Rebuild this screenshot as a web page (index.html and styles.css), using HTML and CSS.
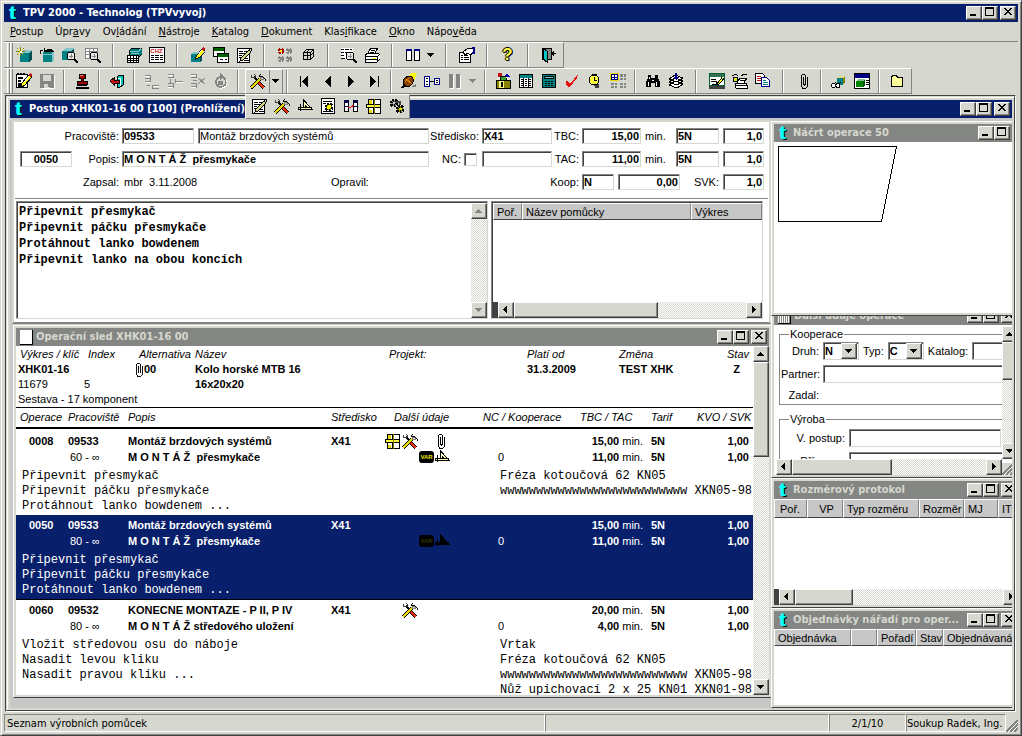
FILE: index.html
```html
<!DOCTYPE html>
<html lang="cs">
<head>
<meta charset="UTF-8">
<meta name="viewport" content="width=device-width, initial-scale=1.0">
<title>TPV 2000 - Technolog (TPVvyvoj)</title>
<link rel="stylesheet" href="styles.css">
</head>
<body>

<svg class="sprite" aria-hidden="true">
    <!-- window buttons and arrows -->
    <symbol id="min" viewBox="0 0 12 10"><path fill="#000" d="M2 7h6v2H2z"/></symbol>
    <symbol id="max" viewBox="0 0 12 10"><path fill="#000" fill-rule="evenodd" d="M1 0h9v9H1zM2 2v6h7V2z"/></symbol>
    <symbol id="close" viewBox="0 0 12 10"><path fill="#000" d="M2 1h2v1h1v1h2V2h1V1h2v1H9v1H8v1H7v1h1v1h1v1h1v1H8V7H7V6H5v1H4v1H2V7h1V6h1V5h1V4H4V3H3V2H2z"/></symbol>
    <symbol id="up" viewBox="0 0 8 8"><path d="M3 2h1v1h1v1h1v1h1v1H0V5h1V4h1V3h1z"/></symbol>
    <symbol id="down" viewBox="0 0 8 8"><path d="M0 2h7v1H6v1H5v1H4v1H3V5H2V4H1V3H0z"/></symbol>
    <symbol id="left" viewBox="0 0 8 8"><path d="M5 0v7H4V6H3V5H2V4H1V3h1V2h1V1h1V0z"/></symbol>
    <symbol id="right" viewBox="0 0 8 8"><path d="M2 0h1v1h1v1h1v1h1v1H5v1H4v1H3v1H2z"/></symbol>

    <!-- shared parts -->
    <symbol id="cube" viewBox="0 0 16 16"><path fill="#84c3c6" d="M4 6l3-3h9l-3 3z"/><path fill="#008284" d="M4 6h9v9H4z"/><path fill="#005153" d="M13 6l3-3v9l-3 3z"/></symbol>
    <symbol id="lens" viewBox="0 0 16 16"><circle cx="9" cy="9" r="4" fill="#e7e7e7" stroke="#000"/><path d="M12 12l4 4" stroke="#000" stroke-width="2"/><path d="M7 9h4M9 7v4" stroke="#848684"/></symbol>
    <symbol id="pencil" viewBox="0 0 16 16"><path d="M6 10l7-8 3 2-7 8-4 2z" fill="#ffff00" stroke="#000"/><path d="M12 2l2-2 2 2-1 3z" fill="#c61010"/><path d="M8 9l5-6" stroke="#fff"/></symbol>

    <!-- first toolbar -->
    <symbol id="cube-new" viewBox="0 0 16 16"><use href="#cube"/><path d="M1 1l7 7M8 1L1 8M4.500 0v9M0 4.500h9" stroke="#848200"/><path d="M2 2l5 5M7 2L2 7" stroke="#ffff00"/><path d="M4 4h2v2H4z" fill="#fff"/></symbol>
    <symbol id="cube-open" viewBox="0 0 16 16"><path fill="#008284" d="M4 5h9v10H4z"/><path fill="#84c3c6" d="M13 5l2-2v10l-2 2z"/><path d="M4 5h11l-2-3H9l-3 1z" fill="#000"/><path d="M1 7V3h3M5 1v4" stroke="#000" fill="none"/><path d="M4 7h9" stroke="#84c3c6"/></symbol>
    <symbol id="cube-find" viewBox="0 0 16 16"><path fill="#84c3c6" d="M0 4l3-3h9L9 4z"/><path fill="#008284" d="M0 4h9v9H0z"/><path fill="#005153" d="M9 4l3-3v8l-3 4z"/><use href="#lens"/></symbol>
    <symbol id="table-find" viewBox="0 0 16 16"><path d="M.5 1.500h12v10H.5z" fill="#fff" stroke="#848684"/><path d="M0 4.500h12M0 7.500h12M4.500 1v10M8.500 1v10" stroke="#848684"/><use href="#lens"/></symbol>
    <symbol id="books" viewBox="0 0 16 16"><path d="M3 4l3-3h10v6l-3 3H3z" fill="#008284" stroke="#000"/><path d="M4 4h9l2-3M5 6h8" stroke="#84c3c6" fill="none"/><path d="M1.500 8.500h11v7h-11z" fill="#fff" stroke="#000"/><path d="M1 11.500h12M1 13.500h12M4.500 9v6M7.500 9v6M10.500 9v6" stroke="#000"/></symbol>
    <symbol id="chz" viewBox="0 0 16 16"><path d="M.5.500h15v15H.5z" fill="#fff" stroke="#000"/><path d="M2 8.500h3M6 8.500h4M11 8.500h3M2 10.500h3M6 10.500h4M11 10.500h3M2 12.500h3M6 12.500h4M11 12.500h3" stroke="#000"/></symbol>
    <symbol id="cube-edit" viewBox="0 0 16 16"><path fill="#84c3c6" d="M1 7l2-2h9l-2 2z"/><path fill="#008284" d="M1 7h9v8H1z"/><path fill="#005153" d="M10 7l2-2v8l-2 2z"/><use href="#pencil" x="1" width="14" height="14"/></symbol>
    <symbol id="windows" viewBox="0 0 16 16"><path d="M.5.500h11v9H.5z" fill="#fff" stroke="#000"/><path d="M1 1h10v3H1z" fill="#006100"/><path d="M4.500 6.500h11v9h-11z" fill="#fff" stroke="#000"/><path d="M5 7h10v3H5z" fill="#006100"/><path d="M7 12.500h3M12 12.500h2" stroke="#000"/></symbol>
    <symbol id="doc-edit" viewBox="0 0 16 16"><path d="M1.500 1.500h12v14h-12z" fill="#fff" stroke="#000"/><path d="M3 4.500h4M8 4.500h4M3 6.500h6M3 8.500h3M3 10.500h3M9 11.500h3M8 13.500h5" stroke="#000"/><path d="M4 14l1-3 8-8 2 2-8 8z" fill="#d6d784" stroke="#000"/><path d="M12 1h3v3" stroke="#000" fill="none"/></symbol>
    <symbol id="gears" viewBox="0 0 16 16"><g fill="none" stroke-width="3" stroke-dasharray="2 1"><circle cx="4" cy="4" r="2" stroke="#a50000"/><circle cx="12" cy="4" r="2" stroke="#848684"/><circle cx="4" cy="12" r="2" stroke="#848684"/><circle cx="12" cy="12" r="2" stroke="#848684"/></g><path d="M3 3h2v2H3z" fill="#ffff00"/></symbol>
    <symbol id="wire-cube" viewBox="0 0 16 16"><path d="M3.500 5.500h7v7h-7zM3.500 5.500l3-3h7v7l-3 3M10.500 5.500l3-3M3 8.500h7l4-3M7.500 5v8M7 5l3-3" fill="none" stroke="#000"/></symbol>
    <symbol id="doc-find" viewBox="0 0 16 16"><path d="M0 1h12v11H0z" fill="#fff"/><path d="M0 2.500h3M4 2.500h4M9 2.500h2M0 5.500h3M4 5.500h4M0 8.500h3M0 11.500h4" stroke="#000"/><use href="#lens"/></symbol>
    <symbol id="printer" viewBox="0 0 16 16"><path d="M4 6l3-5h7l-3 5z" fill="#fff" stroke="#000"/><path d="M7 3.500h4M6 5h4" stroke="#000"/><path d="M1 8l3-2h10l2 2v4l-3 3H1z" fill="#fff" stroke="#000"/><path d="M1 9.500h12l3-2M13 9v5M1 12.500h12" stroke="#000" fill="none"/><path d="M9 11h3v1H9z" fill="#ffff00"/></symbol>
    <symbol id="columns" viewBox="0 0 16 16"><path d="M1.500 2.500h5v11h-5zM9.500 2.500h5v11h-5z" fill="#fff" stroke="#000"/><path d="M1 2h6v2H1zM9 2h6v2H9z" fill="#000084"/></symbol>
    <symbol id="props" viewBox="0 0 16 16"><path d="M.5 5.500h11v10H.5z" fill="#fff" stroke="#000"/><path d="M2 8.500h2M5 8.500h4M2 10.500h2M5 10.500h5M2 12.500h2M5 12.500h5" stroke="#000"/><path d="M4 5l5-4h5v5l-3 2-2-2-3 2z" fill="#fff" stroke="#000"/><path d="M13 0h3v7h-3V5h1V2h-1z" fill="#000084"/></symbol>
    <symbol id="exit" viewBox="0 0 16 16"><path d="M1.500 1.500h9v11h-9z" fill="#848684" stroke="#000"/><path d="M2 1l4 3v11l-4-3z" fill="#00c3c6" stroke="#000"/><path d="M15 6.500h-5M12 4v5M11 6l2-2M11 7l2 2" stroke="#000"/></symbol>

    <!-- second toolbar -->
    <symbol id="note-edit" viewBox="0 0 16 16"><path d="M.5 1.500h11v13H.5z" fill="#fff" stroke="#000"/><path d="M2 1V0M5 1V0M8 1V0M2 4.500h5M2 7.500h3M2 10.500h3M2 12.500h6" stroke="#000" stroke-width="2"/><use href="#pencil"/></symbol>
    <symbol id="save" viewBox="0 0 16 16"><path d="M1 1h14v14H1z" fill="#848684"/><path d="M4 2h8v6H4zM5 11h6v4H5z" fill="#d6d7ce"/><path d="M9 11h2v3H9z" fill="#848684"/><path d="M15.500 2v13.500H2" stroke="#fff" fill="none"/></symbol>
    <symbol id="stamp" viewBox="0 0 16 16"><path d="M5 1h6v4H9v3h4v3H3V8h4V5H5z" fill="#a50000" stroke="#000"/><path d="M3 12h10M2 14.500h13" stroke="#000" stroke-width="2"/><path d="M6 2h3" stroke="#ff8284"/></symbol>
    <symbol id="door" viewBox="0 0 16 16"><path d="M8 4l2-2h4v10l-3 2H8z" fill="#00c3c6" stroke="#000"/><path d="M9 5h2v8" stroke="#fff" fill="none"/><path d="M5 5v2h5v3H5v2L1 8z" fill="#c61010" stroke="#000"/></symbol>
    <symbol id="row-add" viewBox="0 0 16 16"><path d="M1 2.500h6M1 5.500h6M1 8.500h6M6.500 2v7M8 12.500h7M8 15h7M8.500 12v3M3 12h3" fill="none" stroke="#848684"/><path d="M1 3.500h5M1 9.500h5M9 13.500h6" stroke="#fff"/></symbol>
    <symbol id="row-ins" viewBox="0 0 16 16"><path d="M1 1.500h6M1 4.500h6M1 10.500h6M1 13.500h6M6.500 1v4M6.500 10v5M8 8h8M8.500 6v4M3 6v4" fill="none" stroke="#848684"/><path d="M1 2.500h5M1 14.500h5M9 9h7" stroke="#fff"/></symbol>
    <symbol id="row-del" viewBox="0 0 16 16"><path d="M1 1.500h6M1 4.500h6M1 10.500h6M1 13.500h6M6.500 1v4M6.500 10v5M8 5l7 6M8 11l7-6M3 7h4" fill="none" stroke="#848684"/><path d="M1 2.500h5M1 14.500h5" stroke="#fff"/></symbol>
    <symbol id="refresh" viewBox="0 0 16 16"><circle cx="8" cy="9" r="5" fill="#d6d7ce" stroke="#848684" stroke-width="2"/><path d="M7 0l5 4-5 3z" fill="#848684"/><path d="M5 8h5v4H5z" fill="#848684"/><path d="M13 6c3 5-1 10-6 9" stroke="#fff" fill="none"/></symbol>
    <symbol id="tools" viewBox="0 0 16 16"><path d="M4 4l6 6" stroke="#000" stroke-width="2"/><path d="M1 2v2l2 1 2-1V2L4 1" stroke="#424142" fill="none"/><path d="M1 15l9-9" stroke="#000" stroke-width="3"/><path d="M1 15l9-9" stroke="#e7d700" stroke-width="2"/><path d="M9 3l2-2M9 4l3-1 3 3v2" stroke="#000" stroke-width="1" fill="none"/><path d="M10 4h2l2 2-1 1-2-1-1 1z" fill="#c6c7c6" stroke="#848684"/><path d="M9 10l5 5" stroke="#000" stroke-width="4"/><path d="M9 10l5 5" stroke="#e73010" stroke-width="2"/></symbol>
    <symbol id="first" viewBox="0 0 16 16"><path d="M3 3h1v11H3zM11 3v11L5 8.500z"/></symbol>
    <symbol id="prev" viewBox="0 0 16 16"><path d="M11 3v11L5 8.500z"/></symbol>
    <symbol id="next" viewBox="0 0 16 16"><path d="M5 3v11l6-5.500z"/></symbol>
    <symbol id="last" viewBox="0 0 16 16"><path d="M4 3v11l6-5.500zM12 3h1v11h-1z"/></symbol>
    <symbol id="eraser" viewBox="0 0 16 16"><path d="M7 3l3-3h6l-3 9z" fill="#ffff00"/><path d="M10 14h5v-3l-3 1z" fill="#848684"/><path d="M3 6l4-3 4 1 2 4-4 5-5 1-2-3z" fill="#844100" stroke="#000"/><path d="M5 6l6 5M4 9l5-5" stroke="#e78200"/><path d="M0 15l3-4 3 3z"/></symbol>
    <symbol id="link" viewBox="0 0 16 16"><path d="M.5 3.500h5v10h-5zM10.500 5.500h5v6h-5z" fill="#fff" stroke="#000084"/><path d="M2 5.500h2M2 8.500h2M2 11.500h2M12 7.500h2M12 9.500h2M6 8.500h4" stroke="#000"/></symbol>
    <symbol id="pause" viewBox="0 0 16 16"><path d="M2 1h4v14H2zM9 1h4v14H9z" fill="#848684"/><path d="M6.500 2v13.500H3M13.500 2v13.500H10" stroke="#fff" fill="none"/></symbol>
    <symbol id="crate" viewBox="0 0 16 16"><path d="M1 7h14v8H1z" fill="#848200" stroke="#000"/><path d="M4 8h5v7H4z" fill="#ffff84"/><path d="M6.500 9v5" stroke="#000" stroke-width="2"/><path d="M3 0h4v4H3z" fill="#c61010"/><path d="M12 0l3 4H9z" fill="#0000c6"/><path d="M5 3h6v4H5z" fill="#31a231" stroke="#000"/><path d="M2 7l3-3M14 7l-3-3" stroke="#fff"/></symbol>
    <symbol id="table" viewBox="0 0 16 16"><path d="M1.500 1.500h13v13h-13z" fill="#fff" stroke="#000"/><path d="M2 2h12v3H2z" fill="#008284"/><path d="M3 6.500h2M7 6.500h2M11 6.500h2M3 8.500h2M7 8.500h2M11 8.500h2M3 10.500h2M7 10.500h2M11 10.500h2M3 12.500h2M7 12.500h2M11 12.500h2M5.500 5v9M10 5v9" stroke="#000"/></symbol>
    <symbol id="calc" viewBox="0 0 16 16"><path d="M1.500 1.500h13v13h-13z" fill="#008284" stroke="#000"/><path d="M3.500 3.500h9v2h-9z" fill="#84c3c6" stroke="#000"/><path d="M4 8.500h2M7 8.500h2M10 8.500h2M4 10.500h2M7 10.500h2M10 10.500h2M4 12.500h2M7 12.500h2M10 12.500h2" stroke="#000"/></symbol>
    <symbol id="check" viewBox="0 0 16 16"><path d="M2 8l3 1 1 2 8-10-1 4-7 9H4L2 11z" fill="#e71010"/></symbol>
    <symbol id="watch" viewBox="0 0 16 16"><path d="M5 1h4v3H5z" fill="#848200" stroke="#000"/><path d="M7 11h5v4H8z" fill="#424142"/><circle cx="7" cy="7" r="5" fill="#ffff42" stroke="#000"/><path d="M7 4v3h3" stroke="#000" fill="none"/></symbol>
    <symbol id="cells" viewBox="0 0 16 16"><path d="M1.500 1.500h6v5h-6z" fill="#fff" stroke="#000084"/><path d="M1 4h7M4.500 1v6" stroke="#000084"/><path d="M.5 7.500v-7h8v7z" fill="none" stroke="#e7d700"/><path d="M10 1h6v6h-6zM1 10h6v5H1zM10 10h6v5h-6z" fill="#848684"/><path d="M10 4h6M13 1v14M1 12.500h15M4 10v5" stroke="#d6d7ce"/></symbol>
    <symbol id="binoculars" viewBox="0 0 16 16"><path d="M3 2h3v3h4V2h3v3l2 4v5h-5v-4H6v4H1V9l2-4z"/><path d="M3 9v4M11 9v4M4 4v2M7 7h2" stroke="#fff"/></symbol>
    <symbol id="stack" viewBox="0 0 16 16"><path d="M1 12l8 3 6-4-8-3zM1 9l8 3 6-4-8-3zM1 6l8 3 6-4-8-3z" fill="#fff" stroke="#000"/><path d="M7 0h2v4h2L8 7 5 4h2z" fill="#000084"/></symbol>
    <symbol id="chart" viewBox="0 0 16 16"><path d="M.5.500h15v12H.5z" fill="#fff" stroke="#006131"/><path d="M1 1h14v3H1z" fill="#317152"/><path d="M0 13h16v3H0z" fill="#424142"/><path d="M2 6.500h5M2 9l4-1 3 2M3 11h7" stroke="#000" fill="none"/><path d="M8 12l6-7" stroke="#000" stroke-width="3"/><path d="M9 11l5-6" stroke="#ffff00"/></symbol>
    <symbol id="sketch" viewBox="0 0 16 16"><path d="M5 10l3-5h7l-3 5z" fill="#fff" stroke="#000"/><path d="M3 10h11l2 5H4z" fill="#fff" stroke="#000"/><path d="M4 12.500h11M8 7.500h5M0 3l4-2 2 2M9 3l3-2h3" stroke="#000" fill="none"/><path d="M1 4h4v4H1z" fill="#e7e700" stroke="#000"/></symbol>
    <symbol id="copy" viewBox="0 0 16 16"><path d="M.5.500h7l2 2v8h-9z" fill="#fff" stroke="#000"/><path d="M2 3h4M2 5h5M2 7h5" stroke="#c61010"/><path d="M6.500 4.500h5l3 3v6h-8z" fill="#fff" stroke="#000084"/><path d="M8 7.500h3M8 9.500h5M8 11.500h5" stroke="#008284"/></symbol>
    <symbol id="clip" viewBox="0 0 16 16"><path d="M7.500 4v7l1 1 1-1V3l-1-1.500h-2L5.500 3v10l1 2.500h3l2-2V4" stroke="#000" fill="none"/></symbol>
    <symbol id="cube-glasses" viewBox="0 0 16 16"><path fill="#e7d784" d="M6 5l2-2h6l-2 2z"/><path fill="#008284" d="M6 5h6v7H6z"/><path fill="#848200" d="M12 5l2-2v6l-2 3z"/><path d="M5 9L2 12M7 12l3-3" stroke="#000"/><circle cx="2.500" cy="12.500" r="2" fill="#fff" stroke="#000"/><circle cx="7" cy="12.500" r="2" fill="#fff" stroke="#000"/></symbol>
    <symbol id="form-cube" viewBox="0 0 16 16"><path d="M.5.500h15v15H.5z" fill="#fff" stroke="#000"/><path d="M1 1h14v4H1z" fill="#000084"/><path d="M2 8h7v6H2z" fill="#008200"/><path d="M2 8l2-2h7L9 8z" fill="#84c384"/><path d="M9 8l2-2v6l-2 2z" fill="#005100"/><path d="M12 7.500h3M12 9.500h3M12 11.500h3" stroke="#000"/></symbol>
    <symbol id="folder" viewBox="0 0 16 16"><path d="M2.500 4.500l1-2h4l1 2h5v9h-11z" fill="#ffff9c" stroke="#000"/></symbol>

    <!-- tool drop-down and operation flags -->
    <symbol id="triangle" viewBox="0 0 16 16"><path d="M6.500 2v9H15z" fill="#ffffb5" stroke="#000"/><path d="M8 7v2h2z" fill="#fff" stroke="#000"/><path d="M3.500 6v7M1.500 9.500h13v2h-13z" fill="#ffffb5" stroke="#000"/></symbol>
    <symbol id="doc-gear" viewBox="0 0 16 16"><path d="M1.500.500h13v15h-13z" fill="#fff" stroke="#000"/><path d="M3 3.500h9M3 5.500h3" stroke="#000"/><circle cx="9" cy="9" r="3" fill="#848200" stroke="#000" stroke-width="3" stroke-dasharray="2 1"/><circle cx="9" cy="9" r="2" fill="#ffff00"/><path d="M3 13.500h10" stroke="#000"/></symbol>
    <symbol id="flow" viewBox="0 0 16 16"><path d="M1.500 2.500h4v11h-4zM10.500 2.500h4v11h-4z" fill="#fff" stroke="#000"/><path d="M1 2h5v3H1zM10 2h5v3h-5zM1 8h5v1H1zM10 8h5v1h-5z" fill="#000042"/><path d="M5 10l2-1h1l3-2" stroke="#e71010" fill="none"/></symbol>
    <symbol id="pack" viewBox="0 0 16 16"><path d="M2.500 1.500h5v5h-5zM8.500 1.500h6v5h-6zM2.500 9.500h5v6h-5zM8.500 9.500h6v6h-6z" fill="#fff" stroke="#000"/><path d="M3 2h3v4H3zM3 12h3v3H3z" fill="#e7d700"/><path d="M.5 6.500h14v3H.5z" fill="#ffff42" stroke="#000"/><path d="M8 1v15" stroke="#848200"/></symbol>
    <symbol id="cogs" viewBox="0 0 16 16"><circle cx="5" cy="5" r="3" fill="#848684" stroke="#000" stroke-width="3" stroke-dasharray="2 1"/><circle cx="11" cy="11" r="3" fill="#848200" stroke="#000" stroke-width="3" stroke-dasharray="2 1"/><path d="M4 4h2v2H4z" fill="#c6c7c6"/><path d="M10 10h3v2h-3z" fill="#e7e700"/><path d="M7 4h4v3" stroke="#424142" stroke-width="2" fill="none"/></symbol>
    <symbol id="grip" viewBox="0 0 12 12"><path d="M0 12L12 0M4 12l8-8M8 12l4-4" stroke="#848684" stroke-width="2"/><path d="M2 12L12 2M6 12l6-6" stroke="#fff"/></symbol>
</svg>

<div class="app">
    <div class="titlebar">
        <span class="logo">t</span>
        <h1 class="title">TPV 2000 - Technolog (TPVvyvoj)</h1>
        <div class="win-buttons">
            <button type="button" aria-label="Minimalizovat"><svg><use href="#min"/></svg></button>
            <button type="button" aria-label="Maximalizovat"><svg><use href="#max"/></svg></button>
            <button type="button" aria-label="Zavřít"><svg><use href="#close"/></svg></button>
        </div>
    </div>

    <div class="menubar">
        <button type="button"><u>P</u>ostup</button>
        <button type="button">Úpr<u>a</u>vy</button>
        <button type="button">Ov<u>l</u>ádání</button>
        <button type="button"><u>N</u>ástroje</button>
        <button type="button"><u>K</u>atalog</button>
        <button type="button"><u>D</u>okument</button>
        <button type="button">Klas<u>i</u>fikace</button>
        <button type="button"><u>O</u>kno</button>
        <button type="button">Nápo<u>v</u>ěda</button>
    </div>

    <div class="toolbar">
        <button type="button" aria-label="Nový postup"><svg><use href="#cube-new"/></svg></button>
        <button type="button" aria-label="Otevřít"><svg><use href="#cube-open"/></svg></button>
        <button type="button" aria-label="Hledat díl"><svg><use href="#cube-find"/></svg></button>
        <button type="button" aria-label="Hledat v tabulce"><svg><use href="#table-find"/></svg></button>
        <span class="sep wide"></span>
        <button type="button" aria-label="Katalogy"><svg><use href="#books"/></svg></button>
        <button type="button" class="chz"><svg><use href="#chz"/></svg><span>CHZ</span></button>
        <span class="sep wide"></span>
        <button type="button" aria-label="Upravit díl"><svg><use href="#cube-edit"/></svg></button>
        <button type="button" aria-label="Okna"><svg><use href="#windows"/></svg></button>
        <button type="button" aria-label="Upravit postup"><svg><use href="#doc-edit"/></svg></button>
        <span class="sep wide"></span>
        <button type="button" aria-label="Sestavy"><svg><use href="#gears"/></svg></button>
        <button type="button" aria-label="Model"><svg><use href="#wire-cube"/></svg></button>
        <span class="sep wide"></span>
        <button type="button" aria-label="Náhled"><svg><use href="#doc-find"/></svg></button>
        <button type="button" aria-label="Tisk"><svg><use href="#printer"/></svg></button>
        <span class="sep wide"></span>
        <button type="button" aria-label="Sloupce"><svg><use href="#columns"/></svg></button>
        <button type="button" class="drop" aria-label="Volby sloupců"><svg><use href="#down"/></svg></button>
        <span class="sep wide"></span>
        <button type="button" aria-label="Vlastnosti"><svg><use href="#props"/></svg></button>
        <span class="sep wide"></span>
        <button type="button" class="help" aria-label="Nápověda">?</button>
        <span class="sep wide"></span>
        <button type="button" aria-label="Konec"><svg><use href="#exit"/></svg></button>
    </div>

    <div class="toolbar">
        <button type="button" aria-label="Editace"><svg><use href="#note-edit"/></svg></button>
        <button type="button" disabled aria-label="Uložit"><svg><use href="#save"/></svg></button>
        <span class="sep"></span>
        <button type="button" aria-label="Schválit"><svg><use href="#stamp"/></svg></button>
        <span class="sep"></span>
        <button type="button" aria-label="Zpět"><svg><use href="#door"/></svg></button>
        <span class="sep"></span>
        <button type="button" disabled aria-label="Přidat řádek"><svg><use href="#row-add"/></svg></button>
        <button type="button" disabled aria-label="Vložit řádek"><svg><use href="#row-ins"/></svg></button>
        <button type="button" disabled aria-label="Smazat řádek"><svg><use href="#row-del"/></svg></button>
        <button type="button" disabled aria-label="Obnovit"><svg><use href="#refresh"/></svg></button>
        <span class="sep"></span>
        <div class="split">
            <button type="button" aria-label="Nářadí"><svg><use href="#tools"/></svg></button>
            <button type="button" class="drop" aria-label="Další údaje"><svg><use href="#down"/></svg></button>
            <div class="popup">
                <button type="button" aria-label="Popis práce"><svg><use href="#doc-edit"/></svg></button>
                <button type="button" aria-label="Pomůcky"><svg><use href="#tools"/></svg></button>
                <button type="button" aria-label="Náčrt"><svg><use href="#triangle"/></svg></button>
                <button type="button" aria-label="Parametry"><svg><use href="#doc-gear"/></svg></button>
                <button type="button" aria-label="Návaznosti"><svg><use href="#flow"/></svg></button>
                <button type="button" aria-label="Materiál"><svg><use href="#pack"/></svg></button>
                <button type="button" aria-label="Stroje"><svg><use href="#cogs"/></svg></button>
            </div>
        </div>
        <span class="sep"></span>
        <button type="button" aria-label="První"><svg><use href="#first"/></svg></button>
        <button type="button" aria-label="Předchozí"><svg><use href="#prev"/></svg></button>
        <button type="button" aria-label="Následující"><svg><use href="#next"/></svg></button>
        <button type="button" aria-label="Poslední"><svg><use href="#last"/></svg></button>
        <span class="sep"></span>
        <button type="button" aria-label="Vymazat"><svg><use href="#eraser"/></svg></button>
        <button type="button" aria-label="Propojit"><svg><use href="#link"/></svg></button>
        <button type="button" disabled aria-label="Pozastavit"><svg><use href="#pause"/></svg></button>
        <button type="button" disabled class="drop" aria-label="Volby"><svg><use href="#down"/></svg></button>
        <span class="sep"></span>
        <button type="button" aria-label="Kusovník"><svg><use href="#crate"/></svg></button>
        <button type="button" aria-label="Tabulka"><svg><use href="#table"/></svg></button>
        <button type="button" aria-label="Kalkulace"><svg><use href="#calc"/></svg></button>
        <button type="button" aria-label="Kontrola"><svg><use href="#check"/></svg></button>
        <button type="button" aria-label="Časy"><svg><use href="#watch"/></svg></button>
        <button type="button" aria-label="Buňky"><svg><use href="#cells"/></svg></button>
        <span class="sep"></span>
        <button type="button" aria-label="Hledat"><svg><use href="#binoculars"/></svg></button>
        <button type="button" aria-label="Archiv"><svg><use href="#stack"/></svg></button>
        <span class="sep wide"></span>
        <button type="button" aria-label="Grafika"><svg><use href="#chart"/></svg></button>
        <button type="button" aria-label="Návrh"><svg><use href="#sketch"/></svg></button>
        <button type="button" aria-label="Kopírovat"><svg><use href="#copy"/></svg></button>
        <span class="sep wide"></span>
        <button type="button" aria-label="Příloha"><svg><use href="#clip"/></svg></button>
        <span class="sep"></span>
        <button type="button" aria-label="Prohlížet díl"><svg><use href="#cube-glasses"/></svg></button>
        <button type="button" aria-label="Karta dílu"><svg><use href="#form-cube"/></svg></button>
        <span class="sep"></span>
        <button type="button" aria-label="Složka"><svg><use href="#folder"/></svg></button>
    </div>

    <div class="workspace">
        <div class="child">
            <div class="titlebar">
                <span class="logo">t</span>
                <h2 class="title">Postup XHK01-16 00 [100] (Prohlížení)</h2>
                <div class="win-buttons">
                    <button type="button" aria-label="Minimalizovat"><svg><use href="#min"/></svg></button>
                    <button type="button" aria-label="Maximalizovat"><svg><use href="#max"/></svg></button>
                    <button type="button" aria-label="Zavřít"><svg><use href="#close"/></svg></button>
                </div>
            </div>

            <div class="desk">
                <div class="main-col">
                    <form class="panel">
                        <div class="fields">
                            <label class="span2" for="pracoviste">Pracoviště:</label>
                            <div class="pair">
                                <input class="w72 b" type="text" id="pracoviste" value="09533">
                                <input class="grow" type="text" aria-label="Název pracoviště" value="Montáž brzdových systémů">
                            </div>
                            <label for="stredisko">Středisko:</label>
                            <input class="b" type="text" id="stredisko" value="X41">
                            <label for="tbc">TBC:</label>
                            <input class="b num" type="text" id="tbc" value="15,00">
                            <span class="unit">min.</span>
                            <input class="b" type="text" aria-label="Tarif TBC" value="5N">
                            <input class="b num end" type="text" aria-label="Koeficient TBC" value="1,0">

                            <input class="b mid" type="text" aria-label="Číslo operace" value="0050">
                            <label for="popis">Popis:</label>
                            <input class="b" type="text" id="popis" value="M O N T Á Ž  přesmykače">
                            <div class="nc"><label for="nc">NC:</label><input type="checkbox" id="nc"></div>
                            <input type="text" aria-label="NC program" value="">
                            <label for="tac">TAC:</label>
                            <input class="b num" type="text" id="tac" value="11,00">
                            <span class="unit">min.</span>
                            <input class="b" type="text" aria-label="Tarif TAC" value="5N">
                            <input class="b num end" type="text" aria-label="Koeficient TAC" value="1,0">

                            <span class="span2 cap">Zapsal:</span>
                            <div class="signed"><span>mbr&nbsp; 3.11.2008</span><span>Opravil:</span></div>
                            <label class="koop" for="koop">Koop:</label>
                            <div class="pair span3">
                                <input class="w32 b" type="text" id="koop" value="N">
                                <input class="w62 b num" type="text" aria-label="Cena kooperace" value="0,00">
                                <label class="svk" for="svk">SVK:</label>
                            </div>
                            <input class="b num end" type="text" id="svk" value="1,0">
                        </div>
                        <div class="lower">
                            <div class="memo">
                                <textarea aria-label="Popis práce" spellcheck="false">Připevnit přesmykač
Připevnit páčku přesmykače
Protáhnout lanko bowdenem
Připevnit lanko na obou koncích</textarea>
                                <div class="vscroll off">
                                    <button type="button" aria-label="Nahoru"><svg><use href="#up"/></svg></button>
                                    <span class="track"></span>
                                    <button type="button" aria-label="Dolů"><svg><use href="#down"/></svg></button>
                                </div>
                            </div>
                            <div class="listbox">
                                <table class="grid aids">
                                    <colgroup><col class="c-por"><col><col class="c-vyk"></colgroup>
                                    <thead><tr><th>Poř.</th><th>Název pomůcky</th><th>Výkres</th></tr></thead>
                                </table>
                                <div class="blank"></div>
                                <div class="hscroll">
                                    <span class="stub"></span>
                                    <button type="button" aria-label="Vlevo"><svg><use href="#left"/></svg></button>
                                    <span class="thumb w144"></span><span class="track"></span>
                                    <button type="button" aria-label="Vpravo"><svg><use href="#right"/></svg></button>
                                </div>
                            </div>
                        </div>
                    </form>

                    <section class="subwin sled">
                        <div class="titlebar inactive">
                            <span class="page"></span>
                            <h3 class="title">Operační sled XHK01-16 00</h3>
                            <div class="win-buttons">
                                <button type="button" aria-label="Minimalizovat"><svg><use href="#min"/></svg></button>
                                <button type="button" aria-label="Maximalizovat"><svg><use href="#max"/></svg></button>
                                <button type="button" aria-label="Zavřít"><svg><use href="#close"/></svg></button>
                            </div>
                        </div>
                        <div class="sled-body">
                            <div class="report">
                                <table class="head">
                                    <colgroup><col class="h1"><col class="h2"><col class="h3"><col class="h4"><col class="h5"><col class="h6"><col class="h7"><col></colgroup>
                                    <tr class="it"><th>Výkres / klíč</th><th>Index</th><th>Alternativa</th><th>Název</th><th>Projekt:</th><th>Platí od</th><th>Změna</th><th class="r">Stav</th></tr>
                                    <tr class="bold"><td>XHK01-16</td><td></td><td><svg class="clip"><use href="#clip"/></svg>00</td><td>Kolo horské MTB 16</td><td></td><td>31.3.2009</td><td>TEST XHK</td><td class="r state">Z</td></tr>
                                    <tr><td>11679</td><td>5</td><td></td><td><b>16x20x20</b></td><td></td><td></td><td></td><td></td></tr>
                                    <tr><td colspan="8">Sestava - 17 komponent</td></tr>
                                </table>
                                <table class="ops">
                                    <colgroup><col class="o1"><col class="o2"><col><col class="o4"><col class="o5"><col class="o6"><col class="o7"><col class="o8"><col class="o9"></colgroup>
                                    <thead>
                                        <tr class="it"><th>Operace</th><th>Pracoviště</th><th>Popis</th><th>Středisko</th><th class="more">Další údaje</th><th>NC / Kooperace</th><th class="tbc">TBC / TAC</th><th>Tarif</th><th class="r">KVO / SVK</th></tr>
                                    </thead>
                                    <tbody>
                                        <tr class="l1"><td class="no">0008</td><td>09533</td><td>Montáž brzdových systémů</td><td>X41</td><td class="flags"><div><svg><use href="#pack"/></svg><svg><use href="#tools"/></svg><svg class="last"><use href="#clip"/></svg></div></td><td></td><td class="time">15,00 <span>min.</span></td><td>5N</td><td class="r">1,00</td></tr>
                                        <tr class="l2"><td></td><td class="kap">60 - ∞</td><td>M O N T Á Ž &nbsp;přesmykače</td><td></td><td class="flags"><div class="second"><b class="var">VAR</b><svg><use href="#triangle"/></svg></div></td><td class="nck">0</td><td class="time">11,00 <span>min.</span></td><td>5N</td><td class="r">1,00</td></tr>
                                        <tr class="notes"><td colspan="5">Připevnit přesmykač
Připevnit páčku přesmykače
Protáhnout lanko bowdenem ...</td><td colspan="4" class="aid">Fréza kotoučová 62 KN05
wwwwwwwwwwwwwwwwwwwwwwwwww XKN05-98</td></tr>
                                    </tbody>
                                    <tbody class="sel">
                                        <tr class="l1"><td class="no">0050</td><td>09533</td><td>Montáž brzdových systémů</td><td>X41</td><td></td><td></td><td class="time">15,00 <span>min.</span></td><td>5N</td><td class="r">1,00</td></tr>
                                        <tr class="l2"><td></td><td class="kap">80 - ∞</td><td>M O N T Á Ž &nbsp;přesmykače</td><td></td><td class="flags"><div class="second"><b class="var">VAR</b><svg><use href="#triangle"/></svg></div></td><td class="nck">0</td><td class="time">11,00 <span>min.</span></td><td>5N</td><td class="r">1,00</td></tr>
                                        <tr class="notes"><td colspan="5">Připevnit přesmykač
Připevnit páčku přesmykače
Protáhnout lanko bowdenem ...</td><td colspan="4" class="aid"></td></tr>
                                    </tbody>
                                    <tbody>
                                        <tr class="l1"><td class="no">0060</td><td>09532</td><td>KONECNE MONTAZE - P II, P IV</td><td>X41</td><td class="flags"><div class="single"><svg><use href="#tools"/></svg></div></td><td></td><td class="time">20,00 <span>min.</span></td><td>5N</td><td class="r">1,00</td></tr>
                                        <tr class="l2"><td></td><td class="kap">80 - ∞</td><td>M O N T Á Ž středového uložení</td><td></td><td></td><td class="nck">0</td><td class="time">4,00 <span>min.</span></td><td>5N</td><td class="r">1,00</td></tr>
                                        <tr class="notes"><td colspan="5">Vložit středovou osu do náboje
Nasadit levou kliku
Nasadit pravou kliku ...</td><td colspan="4" class="aid">Vrtak
Fréza kotoučová 62 KN05
wwwwwwwwwwwwwwwwwwwwwwwwww XKN05-98
Nůž upichovací 2 x 25 KN01 XKN01-98</td></tr>
                                    </tbody>
                                </table>
                            </div>
                            <div class="vscroll">
                                <button type="button" aria-label="Nahoru"><svg><use href="#up"/></svg></button>
                                <span class="thumb h95"></span><span class="track"></span>
                                <button type="button" aria-label="Dolů"><svg><use href="#down"/></svg></button>
                            </div>
                        </div>
                    </section>
                </div>

                <div class="side-col">
                    <section class="subwin nacrt">
                        <div class="titlebar inactive">
                            <span class="logo">t</span>
                            <h3 class="title">Náčrt operace 50</h3>
                            <div class="win-buttons">
                                <button type="button" aria-label="Minimalizovat"><svg><use href="#min"/></svg></button>
                                <button type="button" aria-label="Maximalizovat"><svg><use href="#max"/></svg></button>
                            </div>
                        </div>
                        <div class="canvas">
                            <svg width="130" height="90"><path d="M4.500 4.500h118l-15 75H4.500z" fill="none" stroke="#000"/></svg>
                        </div>
                    </section>

                    <section class="subwin dalsi">
                        <div class="titlebar inactive">
                            <span class="page lines"></span>
                            <h3 class="title">Další údaje operace</h3>
                            <div class="win-buttons">
                                <button type="button" aria-label="Minimalizovat"><svg><use href="#min"/></svg></button>
                                <button type="button" aria-label="Maximalizovat"><svg><use href="#max"/></svg></button>
                                <button type="button" aria-label="Zavřít"><svg><use href="#close"/></svg></button>
                            </div>
                        </div>
                        <div class="dalsi-body">
                            <form class="dalsi-form">
                                <fieldset class="coop">
                                    <legend>Kooperace</legend>
                                    <div class="row">
                                        <label class="short" for="druh">Druh:</label>
                                        <span class="combo"><select id="druh"><option>N</option></select><i><svg><use href="#down"/></svg></i></span>
                                        <label for="typ">Typ:</label>
                                        <span class="combo"><select id="typ"><option>C</option></select><i><svg><use href="#down"/></svg></i></span>
                                        <label for="katalog">Katalog:</label>
                                        <input class="grow" type="text" id="katalog">
                                    </div>
                                    <div class="row"><label class="short" for="partner">Partner:</label><input class="grow" type="text" id="partner"></div>
                                    <div class="row last"><span class="short">Zadal:</span></div>
                                </fieldset>
                                <fieldset>
                                    <legend>Výroba</legend>
                                    <div class="row"><label class="long" for="vpostup">V. postup:</label><input class="w152" type="text" id="vpostup"></div>
                                    <div class="row"><label class="long" for="priprava">Příprava:</label><input class="grow" type="text" id="priprava"></div>
                                </fieldset>
                            </form>
                            <div class="vscroll">
                                <button type="button" aria-label="Nahoru"><svg><use href="#up"/></svg></button>
                                <span class="thumb h38"></span><span class="track"></span>
                                <button type="button" aria-label="Dolů"><svg><use href="#down"/></svg></button>
                            </div>
                            <div class="hscroll">
                                <button type="button" aria-label="Vlevo"><svg><use href="#left"/></svg></button>
                                <span class="thumb w100"></span><span class="track"></span>
                                <button type="button" aria-label="Vpravo"><svg><use href="#right"/></svg></button>
                            </div>
                            <svg class="size-grip"><use href="#grip"/></svg>
                        </div>
                    </section>

                    <section class="subwin rozmer">
                        <div class="titlebar inactive">
                            <span class="logo">t</span>
                            <h3 class="title">Rozměrový protokol</h3>
                            <div class="win-buttons">
                                <button type="button" aria-label="Minimalizovat"><svg><use href="#min"/></svg></button>
                                <button type="button" aria-label="Maximalizovat"><svg><use href="#max"/></svg></button>
                                <button type="button" aria-label="Zavřít"><svg><use href="#close"/></svg></button>
                            </div>
                        </div>
                        <table class="grid">
                            <colgroup><col class="r1"><col class="r2"><col class="r3"><col class="r4"><col class="r5"><col></colgroup>
                            <thead><tr><th>Poř.</th><th class="c">VP</th><th>Typ rozměru</th><th>Rozměr</th><th>MJ</th><th>IT</th></tr></thead>
                        </table>
                        <div class="blank"></div>
                        <div class="hscroll">
                            <span class="stub"></span>
                            <button type="button" aria-label="Vlevo"><svg><use href="#left"/></svg></button>
                            <span class="thumb w58"></span><span class="track"></span>
                            <button type="button" aria-label="Vpravo"><svg><use href="#right"/></svg></button>
                        </div>
                    </section>

                    <section class="subwin objed">
                        <div class="titlebar inactive">
                            <span class="logo">t</span>
                            <h3 class="title">Objednávky nářadí pro oper...</h3>
                            <div class="win-buttons">
                                <button type="button" aria-label="Minimalizovat"><svg><use href="#min"/></svg></button>
                                <button type="button" aria-label="Maximalizovat"><svg><use href="#max"/></svg></button>
                                <button type="button" aria-label="Zavřít"><svg><use href="#close"/></svg></button>
                            </div>
                        </div>
                        <table class="grid">
                            <colgroup><col class="b1"><col class="b2"><col class="b3"><col class="b4"><col></colgroup>
                            <thead><tr><th>Objednávka</th><th></th><th>Pořadí</th><th>Stav</th><th>Objednávaná</th></tr></thead>
                        </table>
                        <div class="blank"></div>
                    </section>
                </div>
            </div>
        </div>
    </div>

    <div class="statusbar">
        <span class="s-text">Seznam výrobních pomůcek</span>
        <span class="s-empty"></span>
        <span class="s-pos">2/1/10</span>
        <span class="s-user">Soukup Radek, Ing.</span>
        <svg class="size-grip"><use href="#grip"/></svg>
    </div>
</div>

</body>
</html>
```
FILE: styles.css
```css
* {
    box-sizing: border-box;
}
body {
    margin: 0;
    font-family: "Liberation Sans", Arial, sans-serif;
    font-size: 11px;
    line-height: 14px;
    color: #000;
    background-color: #d6d7ce;
}
button, input, select, textarea {
    font: inherit;
    color: inherit;
    margin: 0;
    padding: 0;
    border-radius: 0;
}
svg {
    display: block;
    shape-rendering: crispEdges;
}
.sprite {
    position: absolute;
    width: 0;
    height: 0;
}

/* main window */
.app {
    display: flex;
    flex-direction: column;
    height: 100vh;
    padding: 3px;
    border: 1px solid;
    border-color: #d6d7ce #424142 #424142 #d6d7ce;
    box-shadow: inset 1px 1px #fff, inset -1px -1px #848684;
}
.titlebar {
    display: flex;
    align-items: center;
    flex: none;
    height: 18px;
    padding: 0 2px 0 4px;
    background-color: #08206b;
    color: #fff;
}
.titlebar.inactive {
    background-color: #848684;
    color: #d6d7ce;
}
.title {
    flex: 1;
    margin: 0;
    overflow: hidden;
    white-space: nowrap;
    font: bold 11px/16px "DejaVu Sans Condensed", "DejaVu Sans", sans-serif;
}
.logo {
    width: 15px;
    padding-left: 1px;
    font: bold 18px/16px "Liberation Sans", sans-serif;
    color: #00ffff;
    text-shadow: 1px 0 #00ffff, 2px 1px #000;
}
.page {
    width: 13px;
    height: 15px;
    margin-right: 3px;
    background-color: #fff;
    border: 1px solid #000;
    border-width: 0 1px 1px 0;
}
.page.lines {
    background: repeating-linear-gradient(90deg, #fff 0 1px, #848684 1px 2px);
}
.win-buttons {
    display: flex;
}
.win-buttons button {
    width: 16px;
    height: 14px;
    background-color: #d6d7ce;
    border: 1px solid;
    border-color: #fff #424142 #424142 #fff;
    box-shadow: inset -1px -1px #848684;
}
.win-buttons button:nth-child(3) {
    margin-left: 2px;
}
.win-buttons svg {
    width: 12px;
    height: 10px;
    margin: 0 1px 2px;
}
.menubar {
    display: flex;
    flex: none;
    height: 20px;
    border-bottom: 1px solid #848684;
}
.menubar button {
    padding: 0 6px;
    border: 0;
    background: none;
    font: 11px/20px "DejaVu Sans Condensed", "DejaVu Sans", sans-serif;
}
.toolbar {
    display: flex;
    align-items: center;
    align-self: flex-start;
    flex: none;
    height: 26px;
    padding: 0 3px 0 8px;
    border-top: 1px solid #fff;
    border-bottom: 1px solid #848684;
    border-right: 1px solid #848684;
    background: linear-gradient(90deg, #fff 1px, #d6d7ce 1px 2px, #848684 2px 3px, #fff 3px 4px, #d6d7ce 4px 5px, #848684 5px 6px, #d6d7ce 6px) 3px 0 no-repeat;
}
.toolbar button {
    display: flex;
    justify-content: center;
    align-items: center;
    width: 23px;
    height: 23px;
    border: 0;
    background: none;
}
.toolbar svg {
    width: 16px;
    height: 16px;
}
.toolbar .drop {
    width: 13px;
}
.toolbar .drop svg {
    width: 8px;
    height: 8px;
}
.toolbar .drop:disabled svg {
    fill: #848684;
}
.toolbar .chz {
    position: relative;
}
.chz span {
    position: absolute;
    top: 4px;
    font: bold 6px/7px "Liberation Sans", sans-serif;
    color: #c61010;
}
.toolbar .help {
    font: bold 17px/20px "Liberation Sans", sans-serif;
    color: #ffff42;
    text-shadow: 1px 0 #000, -1px 0 #000, 0 1px #000, 0 -1px #000, 1px 1px #000;
}
.sep {
    width: 2px;
    height: 23px;
    margin: 0 5px;
    background: linear-gradient(90deg, #848684 1px, #fff 1px);
}
.sep.wide {
    margin: 0 8px;
}
.split {
    position: relative;
    display: flex;
    border: 1px solid;
    border-color: #fff #848684 #848684 #fff;
    margin: 0 -2px 0 1px;
}
.split > .drop {
    border-left: 1px solid #848684;
}
.popup {
    position: absolute;
    z-index: 5;
    top: 24px;
    left: -1px;
    display: flex;
    padding: 0 1px;
    background-color: #d6d7ce;
    border: 1px solid;
    border-color: #fff #848684 #848684 #fff;
}

/* document area */
.workspace {
    display: flex;
    flex: 1;
    min-height: 0;
    margin: 1px 2px 0 1px;
    border: 1px solid;
    border-color: #424142 #fff #fff #424142;
}
.child {
    display: flex;
    flex-direction: column;
    flex: 1;
    min-width: 0;
    padding: 3px 2px 2px 3px;
    border: 1px solid;
    border-color: #d6d7ce #424142 #424142 #d6d7ce;
    box-shadow: inset 1px 1px #fff;
}
.desk {
    display: flex;
    flex: 1;
    min-height: 0;
    padding-left: 2px;
    background-color: #c6c7c6;
    overflow: hidden;
}
.main-col {
    display: flex;
    flex-direction: column;
    flex: 1;
    min-width: 0;
}
.side-col {
    display: flex;
    flex-direction: column;
    flex: none;
    width: 241px;
}
.subwin {
    display: flex;
    flex-direction: column;
    flex: none;
    padding: 2px;
    background-color: #d6d7ce;
    border: 1px solid;
    border-color: #fff #424142 #424142 #fff;
}

/* operation form */
.panel {
    flex: none;
    margin-top: 2px;
    padding: 0 1px 1px;
    background-color: #fff;
    border: 2px solid #d6d7ce;
    border-bottom: 2px solid #848684;
}
.fields {
    display: grid;
    grid-template-columns: 52px 50px minmax(0, 1fr) 53px 70px 30px 59px 35px 43px 45px;
    grid-template-rows: 16px 16px 16px;
    row-gap: 7px;
    padding: 6px 4px 8px 5px;
    border-bottom: 1px solid #848684;
    align-items: center;
}
.fields input, .dalsi-form input, .combo {
    width: 100%;
    min-width: 0;
    height: 16px;
    padding: 0 1px;
    background-color: #fff;
    border: 1px solid;
    border-color: #848684 #d6d7ce #d6d7ce #848684;
    box-shadow: inset 1px 1px #424142;
}
.fields label, .fields .cap {
    text-align: right;
    white-space: nowrap;
    padding-right: 3px;
}
.fields .end {
    width: 41px;
    justify-self: end;
}
.span2 {
    grid-column: span 2;
}
.span3 {
    grid-column: span 3;
}
.pair {
    display: flex;
    align-items: center;
    gap: 4px;
}
.fields .w72 {
    width: 72px;
}
.fields .w32 {
    width: 32px;
}
.fields .w62 {
    width: 62px;
}
.fields .grow, .dalsi-form .grow {
    flex: 1;
}
.fields .svk {
    flex: 1;
    padding-right: 0;
}
.fields .koop {
    grid-column: 4 / span 3;
}
.b {
    font-weight: bold;
}
.fields .num {
    text-align: right;
}
.fields .mid {
    text-align: center;
}
.unit {
    padding-left: 4px;
}
.nc {
    display: flex;
    justify-content: flex-end;
    align-items: center;
    padding-right: 5px;
}
.fields .nc input {
    appearance: none;
    width: 13px;
    height: 13px;
}
.signed {
    display: grid;
    grid-template-columns: 1fr 98px;
    padding-left: 2px;
}
.lower {
    display: flex;
    gap: 3px;
    padding: 2px 5px 2px 1px;
    height: 122px;
}
.memo, .listbox {
    display: flex;
    background-color: #fff;
    border: 1px solid;
    border-color: #848684 #d6d7ce #d6d7ce #848684;
    box-shadow: inset 1px 1px #424142;
    padding: 1px 0 0 1px;
}
.memo {
    flex: 1;
}
.memo textarea {
    flex: 1;
    padding: 1px 0 0 1px;
    border: 0;
    resize: none;
    outline: 0;
    overflow: hidden;
    background: none;
    font: bold 12px/16px "Liberation Mono", "Courier New", monospace;
}
.listbox {
    flex-direction: column;
    width: 272px;
}
.blank {
    flex: 1;
    background-color: #fff;
}
.grid {
    width: 100%;
    table-layout: fixed;
    border-collapse: separate;
    border-spacing: 0;
}
.grid th {
    height: 17px;
    padding: 0 0 0 3px;
    overflow: hidden;
    white-space: nowrap;
    font-weight: normal;
    text-align: left;
    background-color: #c6c7c6;
    border: 1px solid;
    border-color: #fff #848684 #424142 #fff;
}
.grid .c {
    text-align: center;
}
.c-por { width: 29px; }
.c-vyk { width: 71px; }

/* scroll bars */
.vscroll, .hscroll {
    display: flex;
    flex: none;
    background: repeating-conic-gradient(#fff 0 25%, #d6d7ce 0 50%) 0 0 / 2px 2px;
}
.vscroll {
    flex-direction: column;
    width: 16px;
}
.hscroll {
    height: 16px;
}
.vscroll button, .hscroll button, .thumb, .combo i {
    display: flex;
    flex: none;
    justify-content: center;
    align-items: center;
    width: 16px;
    height: 16px;
    background-color: #d6d7ce;
    border: 1px solid;
    border-color: #fff #424142 #424142 #fff;
    box-shadow: inset -1px -1px #848684;
}
.vscroll svg, .hscroll svg, .combo svg {
    width: 8px;
    height: 8px;
    flex: none;
}
.vscroll.off svg {
    fill: #848684;
}
.track {
    flex: 1;
}
.stub {
    width: 5px;
    background-color: #424142;
}
.hscroll .w144 { width: 144px; }
.hscroll .w100 { width: 100px; }
.hscroll .w58 { width: 58px; }
.vscroll .h95 { height: 95px; }
.vscroll .h38 { height: 38px; }

/* operation sequence */
.sled {
    flex: 1;
    min-height: 0;
    margin: 1px -1px 10px 1px;
}
.sled-body {
    display: flex;
    flex: 1;
    min-height: 0;
    background-color: #fff;
}
.report {
    flex: 1;
    min-width: 0;
    overflow: hidden;
}
.report table {
    width: 100%;
    table-layout: fixed;
    border-collapse: collapse;
}
.report th, .report td {
    padding: 0;
    text-align: left;
    white-space: nowrap;
    font-weight: inherit;
    vertical-align: top;
}
.it {
    font-style: italic;
    font-weight: normal;
}
.bold {
    font-weight: bold;
}
.report .r {
    text-align: right;
    padding-right: 4px;
}
.report .state {
    padding-right: 13px;
}
.report .head {
    margin-top: 1px;
    border-bottom: 1px solid #000;
}
.head tr {
    height: 15px;
}
.head td {
    line-height: 15px;
}
.report .head th:first-child, .report .head th:nth-child(3) {
    padding-left: 4px;
}
.report .head td:first-child {
    padding-left: 2px;
}
.head td:nth-child(2) {
    text-indent: -4px;
}
.h1 { width: 72px; }
.h2 { width: 47px; }
.h3 { width: 60px; }
.h4 { width: 194px; }
.h5 { width: 138px; }
.h6 { width: 92px; }
.h7 { width: 85px; }
.clip {
    display: inline-block;
    width: 16px;
    height: 15px;
    margin: 0 -3px 0 -4px;
    vertical-align: top;
}
.ops thead tr {
    height: 19px;
    border-bottom: 2px solid #000;
}
.ops thead th {
    line-height: 19px;
}
.report .ops th:first-child {
    padding-left: 4px;
}
.o1 { width: 52px; }
.o2 { width: 60px; }
.o4 { width: 54px; }
.o5 { width: 98px; }
.o6 { width: 92px; }
.o7 { width: 76px; }
.o8 { width: 46px; }
.o9 { width: 56px; }
.report th.more {
    padding-left: 9px;
}
.report th.tbc {
    padding-left: 5px;
}
.ops .l1, .ops .l2 {
    height: 16px;
    font-weight: bold;
}
.ops .l1 td, .ops .l2 td {
    line-height: 16px;
}
.ops .l1 td {
    padding-top: 4px;
}
.ops .sel .l1 td, .ops .sel + tbody .l1 td {
    padding-top: 2px;
}
.ops td.no {
    padding-left: 13px;
}
.ops td.kap {
    padding-left: 2px;
    font-weight: normal;
}
.ops td.nck {
    padding-left: 15px;
    font-weight: normal;
}
.ops td.time {
    text-align: right;
    padding-right: 8px;
}
.time span {
    font-weight: normal;
}
.flags div {
    display: flex;
    align-items: center;
    height: 16px;
}
.flags svg {
    width: 16px;
    height: 16px;
    margin-right: 1px;
}
.flags .last {
    margin-left: 14px;
}
.flags .second {
    padding-left: 34px;
}
.flags .single {
    padding-left: 17px;
}
.var {
    width: 15px;
    height: 12px;
    border-radius: 3px;
    background-color: #000;
    color: #e7e700;
    font-size: 6px;
    line-height: 12px;
    text-align: center;
}
.ops .notes td {
    height: 50px;
    padding: 4px 0 0 6px;
    white-space: pre;
    font: 12px/15px "Liberation Mono", "Courier New", monospace;
}
.ops .notes td.aid {
    padding-left: 17px;
}
.sel {
    background-color: #08206b;
    color: #fff;
    border-bottom: 1px solid #000;
}
.sel .flags svg {
    filter: brightness(0);
}
.sel .var {
    color: #313400;
}

/* right-hand windows, cut off by the edge of the desk */
.nacrt {
    position: relative;
    z-index: 1;
    height: 195px;
    margin-top: 3px;
    border-right: 0;
    padding-right: 0;
}
.canvas {
    flex: 1;
    background-color: #fff;
}
.dalsi {
    width: 251px;
    height: 174px;
    margin-top: -12px;
}
.rozmer {
    width: 251px;
    height: 130px;
}
.objed {
    width: 251px;
    flex: 1;
}
.dalsi-body {
    display: grid;
    grid-template: minmax(0, 1fr) 16px / minmax(0, 1fr) 16px;
    flex: 1;
    min-height: 0;
    padding: 1px 1px 0 2px;
    background-color: #fff;
}
.dalsi-form {
    overflow: hidden;
    padding: 1px 0 0 3px;
}
.dalsi-form fieldset {
    width: 400px;
    min-width: 0;
    margin: 0;
    padding: 0 0 0 1px;
    border: 1px solid #848684;
}
.dalsi-form .coop {
    margin-bottom: 7px;
}
.coop legend + .row {
    margin-top: -2px;
}
.dalsi-form legend {
    margin-left: 8px;
    padding: 0 1px;
}
.row {
    display: flex;
    align-items: center;
    gap: 4px;
    height: 23px;
}
.row.last {
    height: 19px;
}
.dalsi-form .row input {
    height: 18px;
}
.short {
    width: 38px;
    text-align: right;
}
.long {
    width: 64px;
    text-align: right;
}
.dalsi-form .w152 {
    width: 152px;
}
.combo {
    display: flex;
    flex: none;
}
.row .combo {
    width: 36px;
    height: 18px;
}
.combo select {
    flex: 1;
    min-width: 0;
    appearance: none;
    border: 0;
    background: none;
    font-weight: bold;
}
.dalsi .size-grip {
    background-color: #d6d7ce;
}
.size-grip {
    width: 12px;
    height: 12px;
    align-self: flex-end;
}
.rozmer th {
    height: 19px;
}
.rozmer th:first-child {
    padding-left: 5px;
}
.r1 { width: 33px; }
.r2 { width: 36px; }
.r3 { width: 76px; }
.r4 { width: 45px; }
.r5 { width: 34px; }
.b1 { width: 77px; }
.b2 { width: 26px; }
.b3 { width: 39px; }
.b4 { width: 27px; }

/* status bar */
.statusbar {
    display: flex;
    flex: none;
    height: 20px;
    padding-top: 2px;
    font: 11px/18px "DejaVu Sans Condensed", "DejaVu Sans", sans-serif;
}
.statusbar span {
    padding: 0 2px;
    border: 1px solid;
    border-color: #848684 #fff #fff #848684;
    white-space: nowrap;
}
.s-text {
    flex: 54;
}
.s-empty {
    flex: 28;
}
.s-pos {
    width: 77px;
    text-align: center;
}
.statusbar .s-user {
    width: 100px;
    padding: 0;
}
```
